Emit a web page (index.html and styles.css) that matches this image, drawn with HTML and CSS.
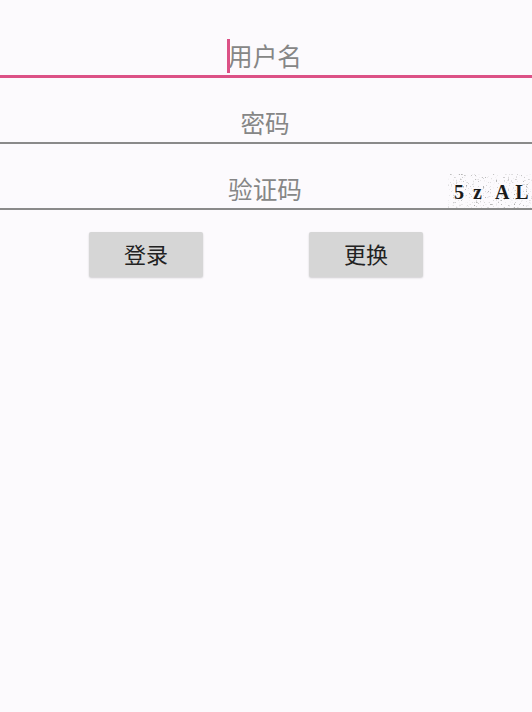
FILE: index.html
```html
<!DOCTYPE html>
<html lang="zh-CN">

<head>
    <meta charset="UTF-8">
    <meta name="viewport" content="width=device-width, initial-scale=1.0">
    <title>登录</title>
    <link rel="stylesheet" href="styles.css">
</head>

<body>
    <section id="page">
        <div class="field active">
            <span class="hint"><i class="caret"></i>用户名</span>
        </div>
        <div class="field">
            <span class="hint">密码</span>
        </div>
        <div class="field">
            <span class="hint">验证码</span>
            <div class="captcha">
                <svg class="noise" width="84" height="34" viewBox="0 0 84 34">
                    <filter id="speckle" x="0" y="0" width="100%" height="100%">
                        <feTurbulence type="fractalNoise" baseFrequency="0.6" numOctaves="2" seed="7" />
                        <feColorMatrix type="matrix" values="0 0 0 0 0.4  0 0 0 0 0.4  0 0 0 0 0.4  3 3 0 0 -3.45" />
                    </filter>
                    <rect width="84" height="34" filter="url(#speckle)" />
                </svg>
                <span class="code">5</span>
                <span class="code">z</span>
                <span class="code wide">A</span>
                <span class="code">L</span>
            </div>
        </div>
        <div class="actions">
            <button class="btn">登录</button>
            <button class="btn">更换</button>
        </div>
    </section>
</body>

</html>
```

FILE: styles.css
```css
body {
    margin: 0;
    background-color: #fcfafd;
    font-family: "Roboto", "Noto Sans CJK SC", sans-serif;
}

#page {
    display: flex;
    flex-direction: column;
    min-height: 712px;
    padding-top: 12px;
    box-sizing: border-box;
}

/* One input row with its underline */
.field {
    position: relative;
    display: flex;
    justify-content: center;
    align-items: flex-end;
    height: 66px;
    padding-right: 2px;
    box-sizing: border-box;
    border-bottom: 2px solid #8a8a8a;
}

.field.active {
    border-bottom: 3px solid #dc5186;
}

.hint {
    position: relative;
    font-size: 24.6px;
    line-height: 34px;
    color: #868686;
}

/* Text cursor of the focused input */
.caret {
    position: absolute;
    left: -1px;
    top: -2px;
    width: 3px;
    height: 34px;
    background-color: #dc5186;
}

/* Captcha picture at the end of the row */
.captcha {
    position: absolute;
    right: 0;
    top: 30px;
    display: flex;
    box-sizing: border-box;
    width: 84px;
    height: 34px;
    padding: 7px 0 0 6px;
    font-family: "Liberation Serif", serif;
}

.noise {
    position: absolute;
    left: 0;
    top: 0;
}

.code {
    position: relative;
    margin-right: 9px;
    font-size: 20px;
    line-height: 22px;
    font-weight: bold;
    color: #1a1a1a;
}

.code.wide {
    margin-left: 4px;
    margin-right: 6px;
}

.actions {
    display: flex;
    gap: 106px;
    padding: 22px 0 0 89px;
}

.btn {
    width: 114px;
    height: 45px;
    padding: 0 0 3px;
    border: none;
    border-radius: 2px;
    background-color: #d6d6d6;
    box-shadow: 0 1px 2px rgba(0, 0, 0, 0.18);
    font-family: inherit;
    font-size: 22px;
    color: #222;
}
```
